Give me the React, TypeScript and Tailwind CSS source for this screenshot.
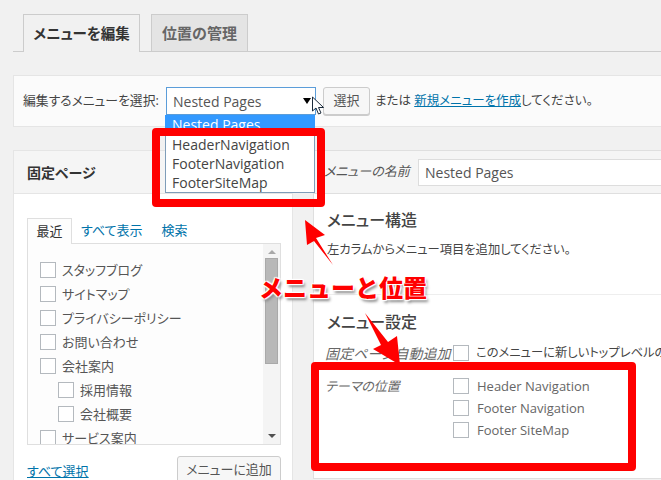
const jp = "font-['Open_Sans','Noto_Sans_CJK_JP',sans-serif] [font-feature-settings:'palt']";

const pages: { label: string; nested?: boolean }[] = [
  { label: "スタッフブログ" },
  { label: "サイトマップ" },
  { label: "プライバシーポリシー" },
  { label: "お問い合わせ" },
  { label: "会社案内" },
  { label: "採用情報", nested: true },
  { label: "会社概要", nested: true },
  { label: "サービス案内" },
];

const locations = ["Header Navigation", "Footer Navigation", "Footer SiteMap"];

function Check() {
  return <span className="block w-4 h-4 shrink-0 bg-white border border-[#b4b9be]" />;
}

export default function App() {
  return (
    <div className={`relative w-[661px] h-[480px] overflow-hidden bg-[#f1f1f1] text-[#444] text-[13px] pl-[13px] ${jp}`}>
      {/* tabs */}
      <div className="flex items-end gap-[11px] h-[52px] pl-[10px] border-b border-[#ccc]">
        <div className="h-[38px] -mb-px w-[117px] flex items-center justify-center bg-[#f1f1f1] border border-[#ccc] border-b-0 text-[14.5px] font-bold text-[#333]">
          メニューを編集
        </div>
        <div className="h-[37px] w-[97px] flex items-center justify-center bg-[#e4e4e4] border border-[#ccc] border-b-0 text-[15px] font-bold text-[#666]">
          位置の管理
        </div>
      </div>

      {/* select bar */}
      <div className="mt-[23px] h-[52px] w-[660px] flex items-center pl-[9px] bg-[#fbfbfb] border border-[#e5e5e5]">
        <span className="w-[143px] shrink-0 whitespace-nowrap text-[12.8px]">編集するメニューを選択:</span>
        <div className="w-[150px] h-[28px] flex items-center pl-[6px] bg-white border border-[#5b9dd9] text-[14px] text-[#555]">
          Nested Pages
        </div>
        <div className="ml-[7px] w-[47px] h-[28px] flex items-center justify-center bg-[#f7f7f7] border border-[#ccc] rounded-[3px] text-[#555] shadow-[0_1px_0_#ccc]">
          選択
        </div>
        <span className="ml-[5px] whitespace-nowrap text-[12.5px]">
          または <a className="text-[#0073aa] underline">新規メニューを作成</a>してください。
        </span>
      </div>

      <div className="mt-[23px] flex gap-[20px]">
        {/* left column */}
        <div className="w-[280px] shrink-0 h-[340px] bg-white border border-[#e5e5e5]">
          <div className="h-[43px] flex items-center pl-[13px] bg-[#f5f5f5] border-b border-[#e5e5e5] text-[14px] font-bold text-[#333]">
            固定ページ
          </div>
          <div className="pl-[13px] pt-[24px] w-[267px]">
            <div className="flex h-[26px] items-start">
              <div className="relative z-10 w-[45px] h-[26px] flex items-center justify-center bg-[#fdfdfd] border border-[#dfdfdf] border-b-0 text-[#333]">
                最近
              </div>
              <a className="ml-[9px] mt-[3px] text-[#0073aa]">すべて表示</a>
              <a className="ml-[19px] mt-[3px] text-[#0073aa]">検索</a>
            </div>
            <div className="-mt-px relative h-[202px] bg-[#fdfdfd] border border-[#dfdfdf] overflow-hidden flex">
              <ul className="flex-1 pl-[12px] pt-[18px] flex flex-col gap-[8px]">
                {pages.map((p) => (
                  <li key={p.label} className={`flex items-center gap-[6px] h-[16px] text-[#555] ${p.nested ? "pl-[18px]" : ""}`}>
                    <Check />
                    <span className="relative top-px">{p.label}</span>
                  </li>
                ))}
              </ul>
              <div className="w-[17px] shrink-0 flex flex-col items-center bg-[#f4f4f4] pt-[6px] pb-[6px]">
                <span className="w-0 h-0 border-x-[4px] border-x-transparent border-b-[4px] border-b-[#a8a8a8]" />
                <div className="mt-[4px] w-[13px] h-[106px] bg-[#b8b8b8] border border-[#a9a9a9]" />
                <span className="mt-auto w-0 h-0 border-x-[4px] border-x-transparent border-t-[4px] border-t-[#505050]" />
              </div>
            </div>
            <div className="mt-[11px] flex items-start justify-between">
              <a className="mt-[6px] text-[#0073aa] underline">すべて選択</a>
              <div className="w-[104px] h-[28px] flex items-center justify-center bg-[#f7f7f7] border border-[#ccc] rounded-[3px] text-[#555]">
                メニューに追加
              </div>
            </div>
          </div>
        </div>

        {/* right column */}
        <div className="w-[360px] shrink-0 h-[329px] bg-white border border-[#dfdfdf]">
          <div className="h-[43px] flex items-center pl-[10px] bg-[#f5f5f5] border-b border-[#dfdfdf]">
            <span className="italic text-[#555] w-[94px] shrink-0 whitespace-nowrap">メニューの名前</span>
            <div className="w-[280px] h-[27px] shrink-0 flex items-center pl-[6px] bg-white border border-[#ddd] text-[14px] text-[#555]">
              Nested Pages
            </div>
          </div>
          <div className="pl-[13px] h-[101px] pt-[15px] border-b border-[#eee]">
            <h3 className="text-[16px] leading-[22px] font-medium text-[#444]">メニュー構造</h3>
            <p className="mt-[10px] leading-[18px] whitespace-nowrap text-[12.3px]">左カラムからメニュー項目を追加してください。</p>
          </div>
          <div className="pl-[11px] pt-[16px]">
            <h3 className="pl-[2px] text-[16px] leading-[22px] font-medium text-[#444]">メニュー設定</h3>
            <div className="mt-[12px] flex items-center h-[16px]">
              <span className="italic text-[#666] text-[14px] w-[128px] shrink-0 whitespace-nowrap">固定ページ自動追加</span>
              <Check />
              <span className="ml-[7px] whitespace-nowrap text-[12.3px]">このメニューに新しいトップレベルの</span>
            </div>
            <div className="mt-[16px] flex">
              <span className="italic text-[#666] w-[128px] shrink-0">テーマの位置</span>
              <ul className="flex flex-col gap-[6px] pt-px">
                {locations.map((l) => (
                  <li key={l} className="flex items-center h-[16px] gap-[8px] text-[#666] text-[13px]">
                    <Check />
                    <span className="relative top-px">{l}</span>
                  </li>
                ))}
              </ul>
            </div>
          </div>
        </div>
      </div>

      {/* open dropdown list */}
      <div className="absolute left-[165px] top-[115px] w-[150px] h-[78px] bg-white border border-[#7f9db9] text-[14px] leading-[19px] text-[#444]">
        <div className="h-[20px] -mt-px -mx-px pl-[7px] bg-[#3399ff] text-white overflow-hidden">Nested Pages</div>
        <div className="pl-[6px]">
          <div>HeaderNavigation</div>
          <div>FooterNavigation</div>
          <div>FooterSiteMap</div>
        </div>
      </div>

      {/* select arrow and mouse pointer */}
      <span className="absolute left-[303px] top-[98px] w-0 h-0 border-x-[4px] border-x-transparent border-t-[6px] border-t-black" />
      <svg className="absolute left-[311px] top-[96px]" width="15" height="20" viewBox="0 0 15 20">
        <path d="M1.5 1 L1.5 15 L5 12 L7.5 18 L10 17 L7.5 11.5 L12.5 11.5 Z" fill="#fff" stroke="#1a2a3a" strokeWidth="1" />
      </svg>

      {/* red annotation boxes */}
      <div className="absolute left-[152px] top-[128px] w-[173px] h-[79px] border-[8px] border-[#ff0000] rounded-[4px]" />
      <div className="absolute left-[311px] top-[362px] w-[325px] h-[109px] border-[8px] border-[#ff0000] rounded-[4px]" />

      {/* annotation arrows */}
      <svg className="absolute left-0 top-0" width="661" height="480" viewBox="0 0 661 480">
        <path d="M305 220 L325 235 L316 238 L333 265 L314 241 L307 245 Z" fill="#ff0000" />
        <path d="M365 313 L388 342 L397 336 L400 365 L373 349 L381 345 Z" fill="#ff0000" />
      </svg>

      <div className="absolute left-[259px] top-[272px] text-[24px] leading-[32px] font-black text-[#ff0000] whitespace-nowrap [font-feature-settings:normal] [text-shadow:0_0_2px_#fff,1px_1px_1px_#fff,-1px_-1px_1px_#fff,1px_-1px_1px_#fff,-1px_1px_1px_#fff,2px_3px_3px_#888]">
        メニューと位置
      </div>
    </div>
  );
}
